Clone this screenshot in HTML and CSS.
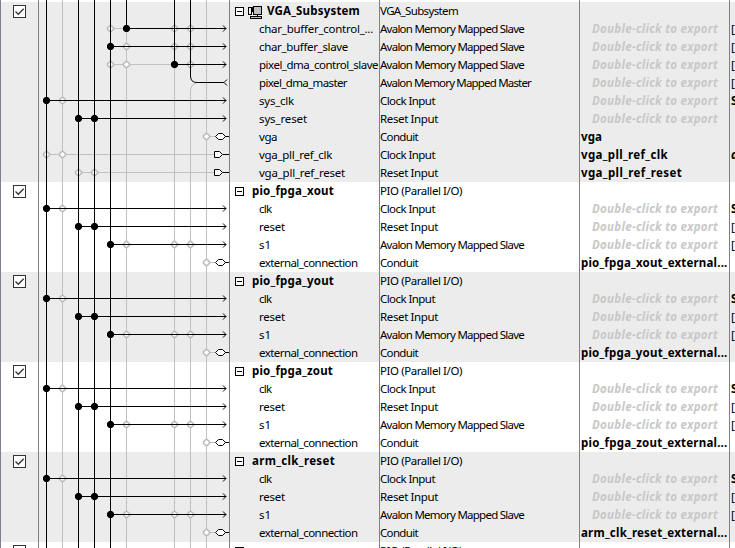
FILE: index.html
```
<!DOCTYPE html>
<html lang="en">
<head>
<meta charset="utf-8">
<title>System Contents</title>
<link rel="stylesheet" href="styles.css">
</head>
<body>
<main class="contents" id="contents"></main>
<script src="app.js"></script>
</body>
</html>
```
FILE: styles.css
```
* { box-sizing: border-box; }
body {
  margin: 0;
  width: 735px;
  height: 548px;
  overflow: hidden;
  background: #fff;
  color: #000;
  font-family: "Noto Sans", "Open Sans", sans-serif;
  font-size: 11.5px;
}
.contents {
  display: flex;
  flex-direction: column;
  height: 548px;
  overflow: hidden;
}
.group {
  display: grid;
  grid-template-columns: 39px 191px 150px 200px 150px 5px;
  flex: none;
  background: #fff;
}
.group.shaded { background: #ececec; }
.spacer { height: 2px; }
.col { border-right: 1px solid #808080; overflow: hidden; }
.col.use { border-left: 1px solid #7c7f8e; padding: 3px 0 0 12px; }
.col.name { padding-left: 5px; }
.col.last { border-right: 0; }
.col svg { display: block; }
.row {
  display: flex;
  height: 18px;
  line-height: 18px;
  white-space: pre;
}
.name .row { padding-left: 24px; }
.name .row.head { padding-left: 0; align-items: flex-start; }
.name .head svg { flex: none; margin-top: 5px; }
.name .head svg.chip { margin: 1px 0 0 4px; }
.name .head .label { margin-left: 8px; }
.name .head .chip + .label { margin-left: 4px; }
.type .row { padding-left: 0; }
.export .row { padding-left: 1px; }
.export .row.hint { padding-left: 12px; }
.last .row { padding-left: 1px; }
.bold { font-weight: 700; }
.hint .label { font-weight: 700; font-style: italic; color: #c8c8c8; }
.slant { font-style: italic; }
.wires { fill: none; stroke: #000; shape-rendering: crispEdges; }
.wires .off { stroke: #c0c0c0; }
.wires .open { stroke: #bcbcbc; stroke-width: 1.6; fill: #fff; shape-rendering: auto; }
.wires .dot { fill: #000; stroke: none; shape-rendering: auto; }
.wires .port { fill: #fff; }
.wires .curve { shape-rendering: auto; }
```
FILE: app.js
```
// [name, type, export name, kind, extra, name width, type width, export width]
const AS = 'Avalon Memory Mapped Slave';
const vga = {
  title: 'VGA_Subsystem', titleWidth: 93, type: 'VGA_Subsystem', typeWidth: 78, chip: true,
  rows: [
    ['char_buffer_control_...', AS, '', 'ctl', '[', 114, 144],
    ['char_buffer_slave', AS, '', 'buf', '[', 89, 144],
    ['pixel_dma_control_slave', AS, '', 'dma', '[', 119, 144],
    ['pixel_dma_master', 'Avalon Memory Mapped Master', '', 'master', '[', 88, 151],
    ['sys_clk', 'Clock Input', '', 'clk', 'S', 35, 55],
    ['sys_reset', 'Reset Input', '', 'reset', '', 48, 58],
    ['vga', 'Conduit', 'vga', 'conduit', '', 18, 38, 21],
    ['vga_pll_ref_clk', 'Clock Input', 'vga_pll_ref_clk', 'clkport', 'a', 73, 55, 87],
    ['vga_pll_ref_reset', 'Reset Input', 'vga_pll_ref_reset', 'rstport', '', 86, 58, 101]
  ]
};
const pio = (title, titleWidth) => ({
  title, titleWidth, type: 'PIO (Parallel I/O)', typeWidth: 82,
  rows: [
    ['clk', 'Clock Input', '', 'clk', 'S', 12.5, 55],
    ['reset', 'Reset Input', '', 'reset', '[', 26, 58],
    ['s1', AS, '', 's1', '[', 12, 144],
    ['external_connection', 'Conduit', title + '_external...', 'conduit', '', 98.5, 38, 146.5]
  ]
});
const groups = [vga, pio('pio_fpga_xout', 82), pio('pio_fpga_yout', 82), pio('pio_fpga_zout', 81),
  pio('arm_clk_reset', 83), { title: '', type: 'PIO (Parallel I/O)', typeWidth: 82, rows: [] }];

const label = (text, width, cls = '') =>
  `<span class="label ${cls}"${width ? ` data-width="${width}"` : ''}>${text}</span>`;
const path = (d, cls = '') => `<path class="${cls}" d="${d}"/>`;
const open = (x, y) => path(`M${x - 3} ${y - .7}L${x - .7} ${y - 3}h1.4L${x + 3} ${y - .7}v1.4L${x + .7} ${y + 3}h-1.4L${x - 3} ${y + .7}Z`, 'open');
const dot = (x, y) => path(`M${x - 1.5} ${y - 3.5}h3l2 2v3l-2 2h-3l-2 -2v-3z`, 'dot');
const arrow = y => path(`M184 ${y - 3}l3 3l-3 3`, 'curve');

// Coordinates are relative to the left edge of the connections column.
const X = { clk: 7.5, clk2: 23.5, r1: 39.5, r2: 55.5, bus: 71.5, bus2: 87.5, m1: 135.5, m2: 151.5, ext: 167.5 };

function wires(g, index) {
  const h = (g.rows.length + 1) * 18;
  let off = '', rings = '', on = '', dots = '';
  const first = index === 0;
  off += path(`M${X.clk2} 0V${h}M${X.ext} 0V${h}`, 'off');
  off += path(`M${X.bus2} ${first ? 27 : 0}V${h}M${X.m1} ${first ? 63 : 0}V${h}M${X.m2} ${first ? 90 : 0}V${h}`, 'off');
  on += path(`M${X.clk} 0V${h}M${X.r1} 0V${h}M${X.r2} 0V${h}M${X.bus} 0V${h}`);
  if (first) {
    on += path(`M${X.bus2} 0V26.5M${X.m1} 0V62.5M${X.m2} 0V74`);
    on += path(`M${X.m2} 74Q${X.m2} 80.5 158 80.5`, 'curve');
    off += path(`M${X.m2} 90Q${X.m2} 82 157 81.5`, 'off curve');
  }
  g.rows.forEach((r, i) => {
    const y = (i + 1) * 18 + 8.5;
    const line = (x, to = 187) => { on += path(`M${x} ${y}H${to}`); };
    const gray = (x, to) => { off += path(`M${x} ${y}H${to}`, 'off'); };
    const ring = (...xs) => xs.forEach(x => { rings += open(x, y); });
    const mark = (...xs) => xs.forEach(x => { dots += dot(x, y); });
    switch (r[3]) {
      case 'ctl': gray(X.bus, X.bus2); ring(X.bus, X.m1, X.m2); line(X.bus2); mark(X.bus2); break;
      case 'buf': ring(X.bus2, X.m1, X.m2); line(X.bus); mark(X.bus); break;
      case 'dma': gray(X.bus, X.m1); ring(X.bus, X.bus2, X.m2); line(X.m1); mark(X.m1); break;
      case 'master': line(157, 185); dots += path(`M188 ${y - 3}l-3 3l3 3`, 'curve'); break;
      case 'clk': ring(X.clk2); line(X.clk); mark(X.clk); break;
      case 'reset': line(X.r1); mark(X.r1, X.r2); break;
      case 's1': ring(X.bus2, X.m1, X.m2); line(X.bus); mark(X.bus); break;
      case 'conduit': gray(X.ext, 177); ring(X.ext); line(186, 191);
        dots += path(`M176.5 ${y}l3 -3h4l3 3l-3 3h-4z`, 'port curve'); break;
      case 'clkport': gray(X.clk, 176); ring(X.clk, X.clk2); break;
      case 'rstport': gray(X.r1, 176); ring(X.r1, X.r2); break;
    }
    if (['ctl', 'buf', 'dma', 'clk', 'reset', 's1'].includes(r[3])) dots += arrow(y);
    if (r[3].endsWith('port')) {
      line(184, 191);
      dots += path(`M175.5 ${y - 3}h5l3 3l-3 3h-5z`, 'port curve');
    }
  });
  return `<svg class="wires" width="190" height="${h}">${off}${rings}${on}${dots}</svg>`;
}

const check = `<svg width="13" height="13" fill="none"><rect x=".5" y=".5" width="12" height="12" fill="#fff" stroke="#333"/><path d="M2.5 6.5L5.3 9.3L10.7 3.7" stroke="#333" stroke-width="1.3"/></svg>`;
const minus = `<svg width="9" height="9"><rect x=".5" y=".5" width="8" height="8" fill="#fff" stroke="#000"/><path d="M2 4.5H7" stroke="#000"/></svg>`;
const chip = `<svg class="chip" width="15" height="16" fill="none" stroke="#000" shape-rendering="crispEdges"><path d="M.5 4.5h3v7h-3zM3.5 7.5h2M9.5 11v2"/><rect x="5.5" y="3.5" width="8" height="8" fill="#c0c0c0"/><path d="M4.5 4v5"/><path d="M2.5 13.5h11v2h-11z" fill="#c0c0c0"/></svg>`;

document.getElementById('contents').innerHTML = `<div class="group spacer">${
  ['use', '', '', '', '', 'last'].map((c, i) => i === 1
    ? `<div class="col"><svg class="wires" width="190" height="2">${Object.entries(X).map(([k, x]) => path(`M${x} 0V2`, k === 'clk2' || k === 'ext' ? 'off' : '')).join('')}</svg></div>`
    : `<div class="col ${c}"></div>`).join('')}</div>` +
groups.map((g, i) => `<section class="group ${i % 2 ? '' : 'shaded'}">
<div class="col use">${check}</div>
<div class="col">${wires(g, i)}</div>
<div class="col name"><div class="row head">${minus}${g.chip ? chip : ''}${g.title ? label(g.title, g.titleWidth, 'bold') : ''}</div>${g.rows.map(r => `<div class="row">${label(r[0], r[5])}</div>`).join('')}</div>
<div class="col type"><div class="row">${label(g.type, g.typeWidth)}</div>${g.rows.map(r => `<div class="row">${label(r[1], r[6])}</div>`).join('')}</div>
<div class="col export"><div class="row"></div>${g.rows.map(r => r[2]
  ? `<div class="row">${label(r[2], r[7], 'bold')}</div>`
  : `<div class="row hint">${label('Double-click to export', 126)}</div>`).join('')}</div>
<div class="col last"><div class="row"></div>${g.rows.map(r => `<div class="row">${r[4] ? label(r[4], 0, r[4] === '[' ? '' : r[4] === 'a' ? 'bold slant' : 'bold') : ''}</div>`).join('')}</div>
</section>`).join('');

document.querySelectorAll('[data-width]').forEach(el => {
  const gap = el.dataset.width - el.getBoundingClientRect().width;
  el.style.letterSpacing = gap / el.textContent.length + 'px';
});
```
